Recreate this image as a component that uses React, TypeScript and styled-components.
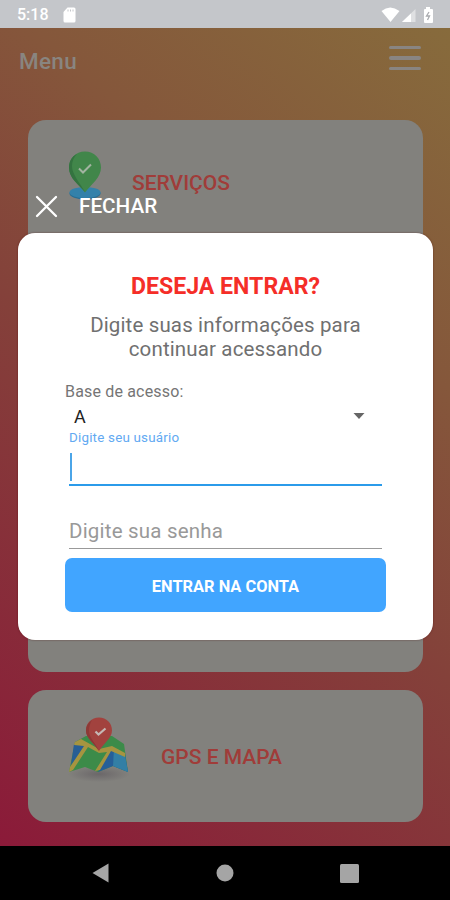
import React from "react";
import styled, { createGlobalStyle } from "styled-components";

const GlobalStyle = createGlobalStyle`
  * { box-sizing: border-box; }
  body { margin: 0; font-family: Roboto, "Liberation Sans", sans-serif; }
  h1, h2, p { margin: 0; }
`;

const Phone = styled.div`
  position: relative;
  display: flex;
  flex-direction: column;
  width: 450px;
  height: 900px;
  overflow: hidden;
  background: #000;
`;

const StatusBar = styled.header`
  display: flex;
  align-items: center;
  flex: none;
  height: 28px;
  padding: 1px 15px 0 17px;
  background: #c4c6ca;
  color: #fff;
`;

const Clock = styled.span`
  width: 46px;
  font-size: 16px;
  font-weight: 500;
  line-height: 26px;
`;

const StatusIcons = styled.div`
  display: flex;
  align-items: center;
  margin-left: auto;
`;

const Screen = styled.main`
  display: flex;
  flex-direction: column;
  flex: 0 0 818px;
  background: linear-gradient(41deg, #8b1a39 0%, #84413a 46%, #85573b 70%, #876b3c 100%);
`;

const TopBar = styled.div`
  display: flex;
  justify-content: space-between;
  height: 92px;
  padding: 17px 29px 0 19px;
`;

const Title = styled.h1`
  color: #898580;
  font-size: 22.5px;
  font-weight: 500;
  line-height: 33px;
  letter-spacing: 0.3px;
`;

const Burger = styled.div`
  display: flex;
  flex-direction: column;
  gap: 7px;
  width: 32px;
  padding-top: 1px;
`;

const BurgerLine = styled.span`
  height: 3.4px;
  border-radius: 2px;
  background: #898582;
`;

const Cards = styled.div`
  display: flex;
  flex-direction: column;
  gap: 18px;
  padding: 0 27px 0 28px;
`;

const Card = styled.section<{ $tall?: boolean }>`
  display: flex;
  align-items: flex-start;
  height: ${(p) => (p.$tall ? 252 : 132)}px;
  border-radius: 18px;
  background: #82817d;
`;

const CardIcon = styled.div<{ $left: number; $top: number }>`
  flex: none;
  display: flex;
  margin: ${(p) => p.$top}px 0 0 ${(p) => p.$left}px;
`;

const CardLabel = styled.h2<{ $gap: number; $top: number }>`
  margin: ${(p) => p.$top}px 0 0 ${(p) => p.$gap}px;
  color: #a03c39;
  font-size: 21px;
  font-weight: 500;
  line-height: 28px;
  white-space: nowrap;
`;

const NavBar = styled.nav`
  display: flex;
  align-items: center;
  justify-content: space-between;
  flex: 1;
  padding: 0 91px 0 92px;
`;

const Overlay = styled.div`
  position: absolute;
  inset: 193px 17px auto 18px;
  display: flex;
  flex-direction: column;
`;

const CloseRow = styled.button`
  display: flex;
  align-items: center;
  gap: 21px;
  height: 40px;
  padding: 0 0 14px 17px;
  border: 0;
  background: none;
  color: #fff;
  font: 500 20.7px/26px Roboto, sans-serif;
`;

const Dialog = styled.section`
  height: 407px;
  padding: 40px 47px 0;
  border-radius: 17px;
  background: #fff;
  box-shadow: 0 0 2px rgba(70, 0, 0, 0.55);
`;

const Heading = styled.h2`
  color: #f52e28;
  font-size: 23.1px;
  font-weight: 700;
  line-height: 28px;
  text-align: center;
`;

const Lead = styled.p`
  margin-top: 12px;
  color: #707070;
  font-size: 20.5px;
  line-height: 24px;
  letter-spacing: 0.14px;
  text-align: center;
`;

const BaseLabel = styled.p`
  margin-top: 20px;
  color: #757575;
  font-size: 16px;
  line-height: 22px;
  letter-spacing: 0.17px;
`;

const Select = styled.div`
  display: flex;
  align-items: center;
  justify-content: space-between;
  height: 26px;
  padding: 0 21px 0 9px;
  color: #222;
  font-size: 18px;
`;

const Field = styled.div<{ $active?: boolean }>`
  display: flex;
  flex-direction: column;
  height: ${(p) => (p.$active ? 57 : 63)}px;
  margin: 0 4px;
  border-bottom: ${(p) => (p.$active ? "2px solid #2b9bea" : "1.5px solid #999")};
`;

const FieldLabel = styled.label`
  color: #62a9f2;
  font-size: 13.4px;
  line-height: 17px;
  letter-spacing: 0.2px;
`;

const Caret = styled.span`
  width: 2.5px;
  height: 28px;
  margin-top: 7px;
  margin-left: 0.5px;
  background: #4ba5e8;
`;

const Placeholder = styled.span`
  margin-top: 32px;
  color: #999;
  font-size: 20.5px;
  line-height: 26px;
  letter-spacing: 0.2px;
`;

const Submit = styled.button`
  display: block;
  width: 321px;
  height: 54px;
  margin-top: 9px;
  padding: 3px 0 0;
  border: 0;
  border-radius: 7px;
  background: #41a5ff;
  color: #fff;
  font: 700 16.4px/51px Roboto, sans-serif;
`;

const PinIcon = () => (
  <svg width="34" height="50" viewBox="0 0 34 50">
    <ellipse cx="17" cy="42.5" rx="15.5" ry="6" fill="#286d93" />
    <ellipse cx="17" cy="41.5" rx="15.5" ry="5.5" fill="#3381aa" />
    <path d="M17 0.5C7.500.5 1 7.500 1 16.500c0 10 9 16 16 25 7-9 16-15 16-25C33 7.500 26.500.5 17 .5z" fill="#41864a" />
    <path d="M9 3C3 6 1 11 1 17c0 10 9 16 16 24C11 31 4 23 4 15c0-5 2-9 5-12z" fill="#347340" />
    <path d="M11 17.500l4 4 8-8" fill="none" stroke="#a2b4a1" strokeWidth="2" />
  </svg>
);

const MapIcon = () => (
  <svg width="62" height="66" viewBox="0 0 62 66">
    <defs>
      <radialGradient id="mapShadow">
        <stop offset="0" stopColor="#6b6769" />
        <stop offset="1" stopColor="#6b6769" stopOpacity="0" />
      </radialGradient>
    </defs>
    <ellipse cx="31" cy="57" rx="31" ry="8" fill="url(#mapShadow)" />
    <path d="M7 25L18 19H44L56 27L60 55L45 49L30 55L17 50L1 55z" fill="#3c8b49" />
    <path d="M6 27L18 29L3 48z" fill="#275e95" />
    <path d="M42 32L57 38L60 55L45 49L30 55z" fill="#265f98" />
    <path d="M46 32L57 38L60 55L45 49z" fill="#337fa5" />
    <path d="M7 25L13 22L31 32L44 29L57 36V40L43 34L32 53L27 54L39 35L31 36L20 30L5 53L1 55L2 50L16 29L6 28z" fill="#a69440" />
    <path d="M31 0.500C23.500.5 18 6 18 13.500 18 21 26 26 31 34c5-8 13-13 13-20.500C44 6 38.500.5 31 .5z" fill="#a2423e" />
    <path d="M24 3c-4 3-6 6-6 11 0 7 8 12 13 20-4-9-10-13-10-20 0-4 1-8 3-11z" fill="#8d3936" />
    <path d="M27.500 14.500l3 3 7-6" fill="none" stroke="#c5b7b4" strokeWidth="2.200" />
  </svg>
);

export default function App() {
  return (
    <Phone>
      <GlobalStyle />
      <StatusBar>
        <Clock>5:18</Clock>
        <svg width="13" height="16" viewBox="0 0 13 16">
          <path d="M4.500.5H11q1.500 0 1.500 1.500v12q0 1.500-1.500 1.500H2q-1.500 0-1.500-1.500V5z" fill="#fff" />
          <path d="M5 2.500v2M7.500 2.500v2M10 2.500v2" stroke="#c4c6ca" strokeWidth="1" />
        </svg>
        <StatusIcons>
          <svg width="54" height="18" viewBox="0 0 54 18">
            <path d="M.5 5Q9 -2 18.500 5L9.500 16z" fill="#fff" />
            <path d="M34.500 3v13H21z" fill="#dfe0e2" />
            <path d="M30 7.500V16h-9z" fill="#fff" />
            <path d="M45 3V1h4v2H51q1 0 1 1V16q0 1-1 1h-7q-1 0-1-1V4q0-1 1-1z" fill="#fff" />
            <path d="M48 6l-2.500 4h3l-2 4" fill="none" stroke="#a9abaf" strokeWidth="1.300" />
          </svg>
        </StatusIcons>
      </StatusBar>
      <Screen>
        <TopBar>
          <Title>Menu</Title>
          <Burger>
            <BurgerLine />
            <BurgerLine />
            <BurgerLine />
          </Burger>
        </TopBar>
        <Cards>
          <Card>
            <CardIcon $left={40} $top={31}><PinIcon /></CardIcon>
            <CardLabel $gap={30} $top={49}>SERVIÇOS</CardLabel>
          </Card>
          <Card />
          <Card $tall />
          <Card>
            <CardIcon $left={40} $top={27}><MapIcon /></CardIcon>
            <CardLabel $gap={31} $top={53}>GPS E MAPA</CardLabel>
          </Card>
        </Cards>
      </Screen>
      <NavBar>
        <svg width="17" height="20" viewBox="0 0 17 20">
          <path d="M16.500.500v19L.5 10z" fill="#a5a5a5" />
        </svg>
        <svg width="18" height="18" viewBox="0 0 18 18">
          <circle cx="9" cy="9" r="8.500" fill="#a5a5a5" />
        </svg>
        <svg width="19" height="19" viewBox="0 0 19 19">
          <rect width="19" height="19" rx="1.500" fill="#a5a5a5" />
        </svg>
      </NavBar>
      <Overlay>
        <CloseRow>
          <svg width="23" height="23" viewBox="0 0 23 23">
            <path d="M2 2l19 19M21 2L2 21" stroke="#fff" strokeWidth="2.300" strokeLinecap="round" />
          </svg>
          FECHAR
        </CloseRow>
        <Dialog>
          <Heading>DESEJA ENTRAR?</Heading>
          <Lead>
            Digite suas informações para
            <br />
            continuar acessando
          </Lead>
          <BaseLabel>Base de acesso:</BaseLabel>
          <Select>
            A
            <svg width="12" height="6" viewBox="0 0 12 6">
              <path d="M.5 0h11L6 6z" fill="#666" />
            </svg>
          </Select>
          <Field $active>
            <FieldLabel>Digite seu usuário</FieldLabel>
            <Caret />
          </Field>
          <Field>
            <Placeholder>Digite sua senha</Placeholder>
          </Field>
          <Submit>ENTRAR NA CONTA</Submit>
        </Dialog>
      </Overlay>
    </Phone>
  );
}
